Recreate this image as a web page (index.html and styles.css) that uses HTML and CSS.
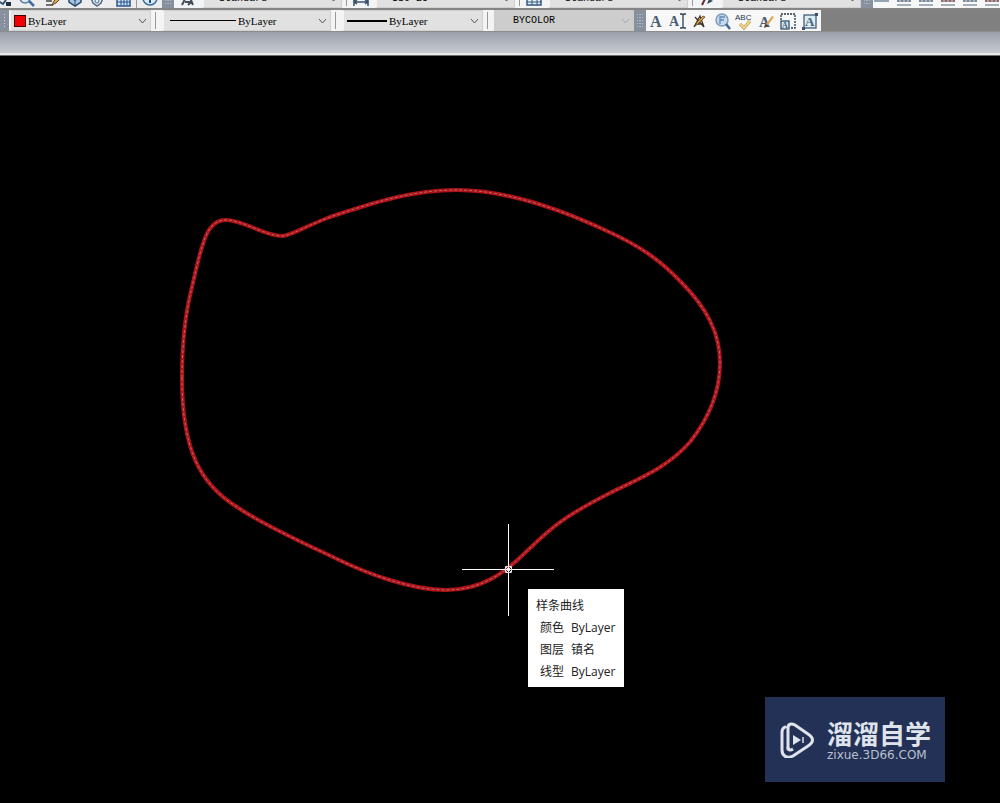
FILE: index.html
```html
<!DOCTYPE html>
<html lang="zh-CN">
  <head>
    <meta charset="UTF-8">
    <title>样条曲线</title>
    <link rel="stylesheet" href="styles.css">
  </head>
  <body>
    <header class="toolbars">
      <div class="toolbar toolbar-styles">
        <div class="tools tools-main">
          <button class="tool" type="button" aria-label="Pan"><svg viewBox="0 0 18 18"><path d="M2 12l5 3 3-4" stroke="#34526f" stroke-width="2" fill="none"/><path d="M10 13h5v4h-5z" fill="#1d2f42"/></svg></button>
          <button class="tool" type="button" aria-label="Zoom"><svg viewBox="0 0 18 18"><circle cx="7" cy="9" r="5" fill="#dceaf6" stroke="#5c7b9c" stroke-width="1.5"/><path d="M11 12l5 5" stroke="#3e6da3" stroke-width="2.5"/></svg></button>
          <button class="tool wide" type="button" aria-label="Match"><svg viewBox="0 0 18 18"><path d="M2 12h6M2 16h7" stroke="#444" stroke-width="1.5"/><path d="M8 16l2-4 5-5 2 2-5 5z" fill="#e1a944" stroke="#54432a"/></svg></button>
          <button class="tool" type="button" aria-label="Block"><svg viewBox="0 0 18 18"><path d="M3 8v5l6 4 6-4V8l-6 3z" fill="#a9c7e3" stroke="#27496e" stroke-width="1.5"/><path d="M9 11v6" stroke="#27496e"/></svg></button>
          <button class="tool" type="button" aria-label="Properties"><svg viewBox="0 0 18 18"><path d="M3 9l2 5 4 3 4-3 2-5-6-4z" fill="#e3edf5" stroke="#536984" stroke-width="1.5"/><circle cx="9" cy="12" r="2" fill="none" stroke="#536984"/></svg></button>
          <button class="tool wide" type="button" aria-label="Calculator"><svg viewBox="0 0 18 18"><rect x="3" y="3" width="13" height="14" fill="#c9dff2" stroke="#295286" stroke-width="1.5"/><path d="M4 10h11M4 13h11M7 8v8M10 8v8M13 8v8" stroke="#295286"/></svg></button>
          <span class="divider"></span>
          <button class="tool" type="button" aria-label="Help"><svg viewBox="0 0 18 18"><circle cx="9" cy="9" r="7" fill="#d7eaf8" stroke="#3a699b" stroke-width="1.5"/><path d="M9 8v6" stroke="#245080" stroke-width="2"/></svg></button>
        </div>
        <span class="grip"></span>
        <button class="tool style-tool" type="button" aria-label="Text style"><svg viewBox="0 0 18 18"><path d="M3 16l6-12 5 12M6 13h7M9 16l4-4" stroke="#46505c" stroke-width="2" fill="none"/></svg></button>
        <div class="combo-box style-box">
          <select class="combo" aria-label="文字样式"><option>Standard</option></select>
          <svg class="chevron" viewBox="0 0 9 6"><path d="M1 1l3.500 4L8 1"/></svg>
        </div>
        <span class="gap"></span>
        <button class="tool style-tool" type="button" aria-label="Dimension style"><svg viewBox="0 0 18 18"><path d="M2 9v8M16 9v8M2 13h14M5 11l-3 2 3 2M13 11l3 2-3 2" stroke="#39506b" stroke-width="1.5" fill="none"/></svg></button>
        <div class="combo-box style-box">
          <select class="combo" aria-label="标注样式"><option>ISO-25</option></select>
          <svg class="chevron" viewBox="0 0 9 6"><path d="M1 1l3.500 4L8 1"/></svg>
        </div>
        <span class="gap"></span>
        <button class="tool style-tool" type="button" aria-label="Table style"><svg viewBox="0 0 18 18"><rect x="2" y="5" width="14" height="11" fill="#e2eefa" stroke="#34577f" stroke-width="1.5"/><path d="M2 9h14M2 13h14M7 5v11M12 5v11" stroke="#34577f"/></svg></button>
        <div class="combo-box style-box">
          <select class="combo" aria-label="表格样式"><option>Standard</option></select>
          <svg class="chevron" viewBox="0 0 9 6"><path d="M1 1l3.500 4L8 1"/></svg>
        </div>
        <span class="gap"></span>
        <button class="tool style-tool" type="button" aria-label="Leader style"><svg viewBox="0 0 18 18"><path d="M4 16l5-10" stroke="#5f2f28" stroke-width="2"/><path d="M9 15l2-5 4 2z" fill="#33475c"/></svg></button>
        <div class="combo-box style-box">
          <select class="combo" aria-label="多重引线样式"><option>Standard</option></select>
          <svg class="chevron" viewBox="0 0 9 6"><path d="M1 1l3.500 4L8 1"/></svg>
        </div>
        <span class="grip"></span>
        <div class="tools tools-dim">
          <button class="tool" type="button" aria-label="Linear"><svg viewBox="0 0 18 18"><path d="M1 12h15" stroke="#34516e"/></svg></button>
          <button class="tool" type="button" aria-label="Aligned"><svg viewBox="0 0 18 18"><path d="M2 12h14M2 16h14M3 9v4M7 9v4M11 9v4M15 9v4" stroke="#55687e"/></svg></button>
          <button class="tool" type="button" aria-label="Arc"><svg viewBox="0 0 18 18"><path d="M2 12h14M2 16h14M3 9v4M7 9v4M11 9v4M15 9v4" stroke="#55687e"/></svg></button>
          <button class="tool" type="button" aria-label="Ordinate"><svg viewBox="0 0 18 18"><path d="M2 12h14M3 9v4M7 9v4M11 9v4M15 9v4" stroke="#683c45" fill="none"/><path d="M2 16h14" stroke="#55687e"/></svg></button>
          <button class="tool" type="button" aria-label="Radius"><svg viewBox="0 0 18 18"><path d="M2 12h14M2 16h14M3 9v4M7 9v4M11 9v4M15 9v4" stroke="#55687e"/></svg></button>
          <button class="tool" type="button" aria-label="Diameter"><svg viewBox="0 0 18 18"><path d="M2 12h14M3 9v4M7 9v4M11 9v4M15 9v4" stroke="#683c45" fill="none"/><path d="M2 16h14" stroke="#55687e"/></svg></button>
        </div>
      </div>

      <div class="toolbar toolbar-props">
        <span class="grip first"></span>
        <div class="combo-box color-box">
          <span class="swatch"></span>
          <select class="combo" aria-label="颜色"><option>ByLayer</option></select>
          <svg class="chevron" viewBox="0 0 9 6"><path d="M1 1l3.500 4L8 1"/></svg>
        </div>
        <span class="gap"></span>
        <div class="combo-box linetype-box">
          <span class="line"></span>
          <select class="combo" aria-label="线型"><option>ByLayer</option></select>
          <svg class="chevron" viewBox="0 0 9 6"><path d="M1 1l3.500 4L8 1"/></svg>
        </div>
        <span class="gap"></span>
        <div class="combo-box weight-box">
          <span class="line thick"></span>
          <select class="combo" aria-label="线宽"><option>ByLayer</option></select>
          <svg class="chevron" viewBox="0 0 9 6"><path d="M1 1l3.500 4L8 1"/></svg>
        </div>
        <span class="gap"></span>
        <div class="combo-box plot-box">
          <select class="combo" aria-label="打印样式" disabled><option>BYCOLOR</option></select>
          <svg class="chevron" viewBox="0 0 9 6"><path d="M1 1l3.500 4L8 1"/></svg>
        </div>
        <span class="grip"></span>
        <div class="tools tools-text">
          <button class="tool" type="button" aria-label="Multiline text"><svg viewBox="0 0 18 18"><text class="glyph" x="3" y="15" font-size="16">A</text></svg></button>
          <button class="tool" type="button" aria-label="Single line text"><svg viewBox="0 0 18 18"><text class="glyph" x="0" y="14" font-size="14">A</text><path d="M11 2h2l1 1 1-1h2M14 3v13M11 16h2l1-1 1 1h2" stroke="#2c4157" stroke-width="1.300" fill="none"/></svg></button>
          <button class="tool" type="button" aria-label="Edit text"><svg viewBox="0 0 18 18"><path d="M4 5l9 10M3 15l6-11 4 11M5 12h7" stroke="#3b3327" stroke-width="1.300" fill="none"/><path d="M4 14l2-4 6-6 2 1-7 7z" fill="#d99e3d" stroke="#4b371c" stroke-width=".7"/></svg></button>
          <button class="tool" type="button" aria-label="Find"><svg viewBox="0 0 18 18"><circle cx="9" cy="8" r="6" fill="#c6daee" stroke="#7f9ab8" stroke-width="1.500"/><path d="M7 12V5h5M7 8h4" stroke="#5f86b3" stroke-width="1.300" fill="none"/><path d="M13 12l4 5" stroke="#3d6798" stroke-width="2.500"/></svg></button>
          <button class="tool" type="button" aria-label="Spell check"><svg viewBox="0 0 18 18"><text class="abc" x="0" y="8" font-size="8">ABC</text><path d="M5 12l4 4 6-7" stroke="#a98544" stroke-width="3" fill="none"/><path d="M5 12l4 4 6-7" stroke="#f3d183" stroke-width="2" fill="none"/></svg></button>
          <button class="tool" type="button" aria-label="Text style"><svg viewBox="0 0 18 18"><text class="glyph" x="2" y="15" font-size="15">A</text><path d="M9 12l6-8 2 1-6 8z" fill="#dfa84c"/><path d="M7 16l1-4 4 2z" fill="#554337"/></svg></button>
          <button class="tool" type="button" aria-label="Scale text"><svg viewBox="0 0 18 18"><path d="M2 8V2h14v14h-5" stroke="#26384b" stroke-width="1.300" stroke-dasharray="2 1" fill="none"/><rect x="2" y="9" width="8" height="8" fill="#d5e9f4" stroke="#34516e" stroke-width="1.300"/><text class="glyph" x="3" y="16" font-size="8">A</text></svg></button>
          <button class="tool" type="button" aria-label="Justify text"><svg viewBox="0 0 18 18"><rect x="3" y="3" width="12" height="13" fill="#d9edf5" stroke="#425d79" stroke-width="1.300"/><text class="glyph" x="4" y="14" font-size="13">A</text><path d="M14 1h3v3h-3zM1 15h3v3H1z" fill="#3d4f63"/></svg></button>
        </div>
      </div>
      <div class="tab-strip"></div>
    </header>

    <main class="canvas">
      <svg class="drawing" role="img" aria-label="样条曲线">
        <defs>
          <path id="spline" d="M182 378C182 345 186 310 192 287C195 274 199 256 202 247C206 234 211 220 226 220C243 220 265 236 282 236C290 236 304 227 330 217C372 203 412 190 457 190C505 190 560 209 607 231C640 246 660 260 680 281C707 308 720 333 720 363C720 390 709 418 690 442C667 468 640 478 610 493C565 516 553 526 528 550C503 575 480 590 446 590C410 590 366 573 337 559C310 546 265 526 237 507C200 484 182 450 182 378Z"/>
        </defs>
        <g transform="translate(0 -56)">
          <use href="#spline" class="spline"/>
          <use href="#spline" class="spline-dash"/>
          <path class="crosshair" d="M462 569.500h92M508.500 524v92"/>
          <path class="pickbox" d="M505.500 566.500h6v6h-6zM506 567l5 5M511 567l-5 5"/>
        </g>
      </svg>

      <div class="tooltip" role="tooltip">
        <div class="tooltip-title">样条曲线</div>
        <dl class="tooltip-list">
          <dt>颜色</dt><dd>ByLayer</dd>
          <dt>图层</dt><dd>镇名</dd>
          <dt>线型</dt><dd>ByLayer</dd>
        </dl>
      </div>

      <div class="watermark">
        <svg class="watermark-logo" viewBox="0 0 34 36">
          <path d="M8 27V6c0-4 3-5 7-3l13 9c6 4 6 8 0 12l-15 10C7 37 2 34 2 28V10c0-3 1-4 3-5" fill="none" stroke="#dfe3ec" stroke-width="3" stroke-linecap="round"/>
          <path d="M8 25c0 3 2 4 5 2" fill="none" stroke="#dfe3ec" stroke-width="3"/>
          <path d="M13 13l8 5-8 5z" fill="#dfe3ec"/>
          <path d="M23 15v6" stroke="#dfe3ec" stroke-width="1.500"/>
        </svg>
        <div class="watermark-text">
          <strong>溜溜自学</strong>
          <span>zixue.3D66.COM</span>
        </div>
      </div>
    </main>
  </body>
</html>
```
FILE: styles.css
```css
* {
  box-sizing: border-box;
}
body {
  margin: 0;
  min-height: 100vh;
  display: flex;
  flex-direction: column;
  background: #000;
  font-family: "Open Sans", "Noto Sans CJK SC", sans-serif;
  font-size: 12px;
  overflow: hidden;
}

/* toolbars */
.toolbars {
  background: #808080;
}
.toolbar {
  display: flex;
  height: 21px;
}
/* upper bar is scrolled, only its lower edge shows */
.toolbar-styles {
  height: 10px;
  align-items: flex-end;
  overflow: hidden;
  border-bottom: 2px solid #858585;
}
.toolbar-styles > * {
  height: 21px;
}
.grip {
  flex: none;
  width: 12px;
  background: radial-gradient(circle, #d5dae0 1px, transparent 1px) center / 3px 3px content-box, #87909d;
  padding: 4px 3px;
}
.grip.first {
  width: 9px;
}
.gap {
  flex: none;
  width: 11px;
  background: linear-gradient(#999, #999) 4px center / 1px 17px no-repeat, #f4f4f4;
}
.toolbar-styles .gap {
  width: 5px;
}
.tools {
  display: flex;
  align-items: center;
  background: #f7f7f7;
}
.tool {
  flex: none;
  width: 18px;
  height: 18px;
  padding: 0;
  border: 0;
  background: none;
}
.tool svg {
  display: block;
  width: 18px;
  height: 18px;
}
.tools-main {
  flex: none;
  width: 162px;
  gap: 4px;
  background: #ededed;
}
.tools-main .tool:first-child {
  margin-left: -4px;
}
.tools-main .wide {
  margin-left: 4px;
}
.divider {
  width: 1px;
  height: 21px;
  background: #999;
}
.style-tool {
  width: 28px;
  height: 21px;
  padding: 1px 5px;
  background: #f2f4f6;
}
.tools-dim {
  flex: 1;
  gap: 4px;
}
.tools-text {
  gap: 4px;
  padding: 0 2px 0 1px;
}
.glyph {
  font-family: "Liberation Serif", serif;
  font-weight: bold;
  fill: #4a5e75;
}
.abc {
  font-family: "Liberation Sans", sans-serif;
  fill: #24374c;
}

/* drop-downs */
.combo {
  appearance: none;
  flex: 1;
  min-width: 0;
  margin: 0;
  padding: 0;
  border: 0;
  border-radius: 0;
  background: none;
  color: #000;
  font: 11px "Liberation Serif", serif;
}
.style-box .combo,
.plot-box .combo {
  opacity: 1;
  font: 10px "Liberation Mono", monospace;
}
.combo-box {
  flex: none;
  display: flex;
  align-items: center;
  gap: 2px;
  padding: 0 3px;
  background: #e1e1e1;
  border: 1px solid #d0d0d0;
  border-left: 2px solid #f4f4f4;
}
.style-box {
  width: 140px;
  padding: 2px 3px 0 15px;
}
.color-box {
  width: 142px;
}
.linetype-box {
  width: 169px;
  padding-left: 6px;
}
.weight-box {
  width: 141px;
}
.plot-box {
  width: 140px;
  padding-left: 17px;
  background: #cdcdcd;
  border-color: #cdcdcd;
}
.swatch {
  width: 12px;
  height: 12px;
  background: #f00000;
  border: 1px solid #400;
}
.line {
  width: 66px;
  height: 1px;
  background: #000;
}
.line.thick {
  width: 40px;
  height: 2px;
}
.chevron {
  width: 9px;
  height: 6px;
  fill: none;
  stroke: #555;
}
.plot-box .chevron {
  stroke: #aaa;
}
.tab-strip {
  height: 25px;
  background: linear-gradient(#9a9ea6, #a5abb5 20%, #c6c9cf 90%);
  border-top: 1px solid #8c8c8c;
  border-bottom: 1px solid #6c6c6c;
  box-shadow: inset 0 -2px #e9e9e9;
}

/* drawing area */
.canvas {
  flex: 1;
  position: relative;
}
.drawing {
  position: absolute;
  top: 0;
  left: 0;
  width: 100%;
  height: 100%;
}
.spline {
  fill: none;
  stroke: #b01218;
  stroke-width: 4;
}
.spline-dash {
  fill: none;
  stroke: #b0686a;
  stroke-width: 1;
  stroke-dasharray: 3 2;
}
.crosshair {
  stroke: #fff;
}
.pickbox {
  fill: none;
  stroke: #ddd;
}
.tooltip {
  position: absolute;
  left: 528px;
  top: 533px;
  padding: 6px 9px 4px 8px;
  background: #fff;
  color: #222;
  line-height: 22px;
}
.tooltip-list {
  display: grid;
  grid-template-columns: auto auto;
  column-gap: 7px;
  margin: 0;
  padding-left: 4px;
}
.tooltip-list dd {
  margin: 0;
}

.watermark {
  position: absolute;
  right: 55px;
  bottom: 21px;
  display: flex;
  align-items: center;
  gap: 13px;
  width: 180px;
  height: 85px;
  padding-left: 15px;
  background: #243156;
  color: #dfe3ec;
}
.watermark-logo {
  flex: none;
  width: 34px;
  height: 36px;
}
.watermark-text {
  display: flex;
  flex-direction: column;
}
.watermark-text strong {
  font: bold 26px/30px "Noto Sans CJK SC", sans-serif;
}
.watermark-text span {
  font: 12px/14px "DejaVu Sans", sans-serif;
  color: #b9c0d0;
}
```
